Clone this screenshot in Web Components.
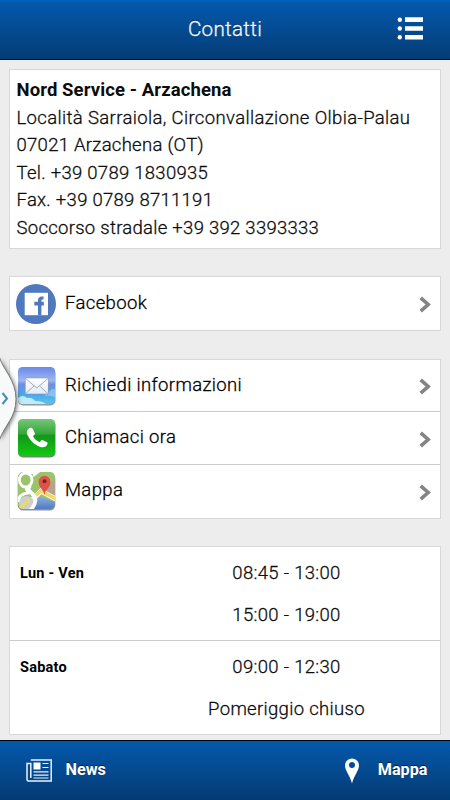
<!DOCTYPE html>
<html lang="it">
<head>
<meta charset="utf-8">
<title>Contatti</title>
<style>
html,body{margin:0;height:100%}
body{background:#ededed;font-family:Roboto,"Liberation Sans",sans-serif;font-size:18.5px;font-weight:300;letter-spacing:.36px;color:#0c0c0c;-webkit-text-stroke:.28px;overflow:hidden}
</style>
</head>
<body>
<contact-app></contact-app>
<script>
const define = (name, html) => customElements.define(name, class extends HTMLElement {
  constructor() {
    super();
    const t = document.createElement('template');
    t.innerHTML = html;
    this.attachShadow({ mode: 'open' }).append(t.content.cloneNode(true));
  }
});

define('app-header', `<style>
:host{display:grid;grid-template-columns:60px 1fr 60px;align-items:center;box-sizing:border-box;height:60px;padding-bottom:3px;border-top:2px solid #0060bb;border-bottom:1px solid #00060f;background:linear-gradient(#0359ad,#043c74);color:#f5f8ff;font-size:20.6px;letter-spacing:.3px;text-align:center;text-shadow:0 -1px 0 #022a55}
svg{display:block;margin-left:7px;margin-top:-1px}
</style><i></i><span><slot></slot></span>
<svg width="27" height="23" fill="#fff"><circle cx="2.8" cy="2.7" r="2.2"/><circle cx="2.8" cy="11.5" r="2.2"/><circle cx="2.8" cy="20.2" r="2.2"/><path d="M8 .3h18v4.6H8zM8 9.2h18v4.6H8zM8 17.9h18v4.6H8z"/></svg>`);

define('info-card', `<style>
:host{display:block;box-sizing:border-box;background:#fff;border:1px solid #d8d8d8}
</style><slot></slot>`);

define('address-lines', `<style>
:host{display:block;padding:7px 7px 6px 6.5px;line-height:27.5px;white-space:nowrap}
::slotted(b){font-weight:700;letter-spacing:.1px;-webkit-text-stroke:0}
::slotted(*){display:block}
::slotted(.num){letter-spacing:.28px}
</style><slot></slot>`);

define('link-row', `<style>
:host{display:flex;align-items:center;box-sizing:border-box;height:53px;padding:0 8px 0 6px}
:host(.line){border-bottom:1px solid #ccc}
span{flex:1;margin-left:9px;color:#000;padding-bottom:var(--lift,2px)}
svg{display:block;margin-top:2px}
</style><slot name="icon"></slot><span><slot></slot></span>
<svg width="13" height="17" fill="none" stroke="#848484" stroke-width="3.6"><path d="M1.7 1.8 9.2 8.5 1.7 15.2"/></svg>`);

define('icon-facebook', `<style>:host{display:block;width:40px;height:40px}svg{display:block}</style>
<svg width="40" height="40"><circle cx="20" cy="20" r="20" fill="#4f78bf"/><path d="M8.7 8.8H32v22.4H8.7z" fill="#fff"/><path d="M22 31.2v-9.8h-3.700v-3.700H22v-1.500c0-2.300 1.600-3.600 3.600-3.600h2v3h-.9c-1 0-1.300.5-1.300 1.300v.8h2.400v3.700h-2.400v9.800z" fill="#4f78bf"/></svg>`);

define('icon-mail', `<style>:host{display:block;width:40px;height:40px}svg{display:block}</style>
<svg width="40" height="40"><defs><linearGradient id="s" x2="0" y2="1"><stop stop-color="#6386e8"/><stop offset=".36" stop-color="#a0b6ef"/><stop offset=".46" stop-color="#6f8edd"/><stop offset=".72" stop-color="#4aaae8"/><stop offset="1" stop-color="#5cc8ee"/></linearGradient><linearGradient id="e" x2="0" y2="1"><stop stop-color="#fff"/><stop offset="1" stop-color="#e4eaf5"/></linearGradient><clipPath id="c"><rect x="2" y="1" width="37" height="37" rx="4.5"/></clipPath></defs>
<rect x="2" y="2" width="37.5" height="37.5" rx="5" fill="#67797f" opacity=".75"/>
<g clip-path="url(#c)"><path fill="url(#s)" d="M0 0h40v40H0z"/><path d="M2 32q5-4 9 0 5-1 8 3 9 0 12 4H2z" fill="#d2f3fb" opacity=".85"/><path d="m28 30 8-7h4v9q-4-3-12-2z" fill="#fff" opacity=".3"/></g>
<rect x="9.2" y="12" width="23" height="16" fill="url(#e)" stroke="#7b8cab" stroke-width=".5"/><path d="m9.500 12.500 11.300 9.500L32 12.500M9.500 27.800l8.700-8M32 27.800l-8.600-8" fill="none" stroke="#98a2b4" stroke-width=".9"/></svg>`);

define('icon-phone', `<style>:host{display:block;width:40px;height:40px}svg{display:block}</style>
<svg width="40" height="40"><defs><linearGradient id="g" x2="0" y2="1"><stop stop-color="#75c878"/><stop offset=".4" stop-color="#35a638"/><stop offset=".45" stop-color="#11981a"/><stop offset="1" stop-color="#12c910"/></linearGradient></defs>
<rect x="2" y="2" width="37.5" height="37.5" rx="5" fill="#34733a" opacity=".8"/><rect x="2" y="1" width="37" height="37" rx="4.5" fill="url(#g)"/>
<path d="M13.2 10.2C11 11.7 10.2 14 11.4 17c3.3 6.5 8 10.6 13.8 12.2 2.900.6 5.500-.8 6.300-3.200.3-1-.1-1.400-1-1.900l-3.600-1.800c-1-.4-1.600-.1-2.200.6l-1 1.300c-3-1.200-5.500-3.500-6.700-6.200l1.200-1c.8-.7.9-1.200.5-2.100l-1.800-3.900c-.4-1-1.800-1.900-3.700-.8z" fill="#fff"/></svg>`);

define('icon-map', `<style>:host{display:block;width:40px;height:40px;margin-top:-2px}svg{display:block}</style>
<svg width="40" height="40"><defs><clipPath id="m"><rect x="2" y="1" width="37" height="37" rx="5"/></clipPath><linearGradient id="b" x2="0" y2="1"><stop stop-color="#91b0e0"/><stop offset="1" stop-color="#4673bd"/></linearGradient></defs>
<rect x="1.7" y="2" width="37.6" height="37.5" rx="5.5" fill="#8b9299"/>
<g clip-path="url(#m)"><path fill="#9ac36b" d="M0 0h40v40H0z"/><path d="M40 8v20L25 20z" fill="#b7a28e"/><path d="M14 40 22 25l18 6v9z" fill="url(#b)"/><path d="M16 29 25 20l15 8" fill="none" stroke="#fff" stroke-width="5"/><path d="M18 26l7-6 15 8" fill="none" stroke="#efd868" stroke-width="3.6"/>
<ellipse cx="10.500" cy="32" rx="7.500" ry="7" fill="#c9cfd2"/><path d="m3 38 10-9" stroke="#efd868" stroke-width="3.500"/>
<ellipse cx="9.700" cy="9" rx="6.300" ry="7" fill="none" stroke="#fff" stroke-width="2.800"/><path d="M10 2h11l-4 3" fill="none" stroke="#fff" stroke-width="2.200"/><path d="M14.500 14.500c-3.500 3-2 5 1 7.500 5.500 4.500 5 11-1 17" fill="none" stroke="#fff" stroke-width="3.800"/><path d="M10 17l2 5c-6 .5-9.500 4-10 9" fill="none" stroke="#fff" stroke-width="2.800"/></g>
<path d="M28.5 24c-.8-6-5.9-6.600-5.900-13.200a5.900 6 0 0 1 11.800 0C34.400 17.400 29.300 18 28.5 24z" fill="#e05147"/><circle cx="28.5" cy="10.2" r="2" fill="#7b241e"/></svg>`);

define('hours-row', `<style>
:host{display:grid;grid-template-columns:120px 1fr;box-sizing:border-box;height:94px;padding:5px 0 3px 10px}
:host(.line){border-bottom:1px solid #ccc}
b{font-size:14.5px;font-weight:700;letter-spacing:.25px;line-height:43px;color:#000;-webkit-text-stroke:0}
div{line-height:42.4px;text-align:center;padding-right:7px;letter-spacing:.32px}
::slotted(*){display:block}
</style><b><slot name="day"></slot></b><div><slot></slot></div>`);

define('side-tab', `<style>
:host{position:absolute;left:0;top:346px;width:26px;height:106px}
svg{display:block;filter:drop-shadow(1px 1px 2px #0008)}
</style><svg width="26" height="106"><path d="M-1 10C3 24 16 34 16 53S5 78-1 95z" fill="#f8faf9" stroke="#777" stroke-width="1"/><path d="m2.500 47 4.500 5.500-4.500 5.500" fill="none" stroke="#428eb4" stroke-width="2"/></svg>`);

define('app-footer', `<style>
:host{display:flex;justify-content:space-between;align-items:center;box-sizing:border-box;height:60px;border-top:1px solid #000814;padding:0 22.5px 2px 26px;background:linear-gradient(#0459ad,#043b73);color:#fff;font-weight:700;font-size:16.2px;letter-spacing:0;-webkit-text-stroke:0;text-shadow:0 -1px 0 #023}
div{display:flex;align-items:center}
svg{display:block}
</style>
<div><svg width="27" height="24" fill="none" stroke="#e9f2fd" stroke-width="1.5" style="margin-right:12.5px;margin-top:2px"><path d="M4.8 1h20.400v21H2.5Q1 22 1 20V4.500h3.800V19"/><path d="M7.500 3.500h7v7h-7z" fill="#fff" stroke="none"/><path d="M16.500 4.500h6M16.500 8.500h6M7.500 12.800h15M7.500 16.200h15M7.500 19h15" stroke-width="1.2"/></svg><slot name="left"></slot></div>
<div><svg width="16" height="26" style="margin-right:18px;margin-top:2px"><path fill="#fff" fill-rule="evenodd" d="M8 .5A7 7 0 0 1 15 7.500c0 5-4.500 9-7 18-2.500-9-7-13-7-18A7 7 0 0 1 8 .5zM8 4a3 3 0 1 0 0 6 3 3 0 0 0 0-6z"/></svg><slot name="right"></slot></div>`);

define('contact-app', `<style>
:host{display:flex;flex-direction:column;height:800px;width:450px;position:relative}
main{flex:1;display:flex;flex-direction:column;padding:9px 9px 0}
.a{height:180px;margin-bottom:27px}.b{height:55px;margin-bottom:28px}.c{height:160px;margin-bottom:27px}.d{height:189px}
.c link-row:first-child{height:52px}
.c link-row:last-child{--lift:4px}
</style>
<app-header>Contatti</app-header>
<main>
<info-card class="a"><address-lines><b>Nord Service - Arzachena</b><span>Località Sarraiola, Circonvallazione Olbia-Palau</span><span class="num">07021 Arzachena (OT)</span><span class="num">Tel. +39 0789 1830935</span><span class="num">Fax. +39 0789 8711191</span><span class="num">Soccorso stradale +39 392 3393333</span></address-lines></info-card>
<info-card class="b"><link-row><icon-facebook slot="icon"></icon-facebook>Facebook</link-row></info-card>
<info-card class="c"><link-row class="line"><icon-mail slot="icon"></icon-mail>Richiedi informazioni</link-row><link-row class="line"><icon-phone slot="icon"></icon-phone>Chiamaci ora</link-row><link-row><icon-map slot="icon"></icon-map>Mappa</link-row></info-card>
<info-card class="d"><hours-row class="line"><span slot="day">Lun - Ven</span><span>08:45 - 13:00</span><span>15:00 - 19:00</span></hours-row><hours-row><span slot="day">Sabato</span><span>09:00 - 12:30</span><span>Pomeriggio chiuso</span></hours-row></info-card>
</main>
<app-footer><span slot="left">News</span><span slot="right">Mappa</span></app-footer>
<side-tab></side-tab>`);
</script>
</body>
</html>
